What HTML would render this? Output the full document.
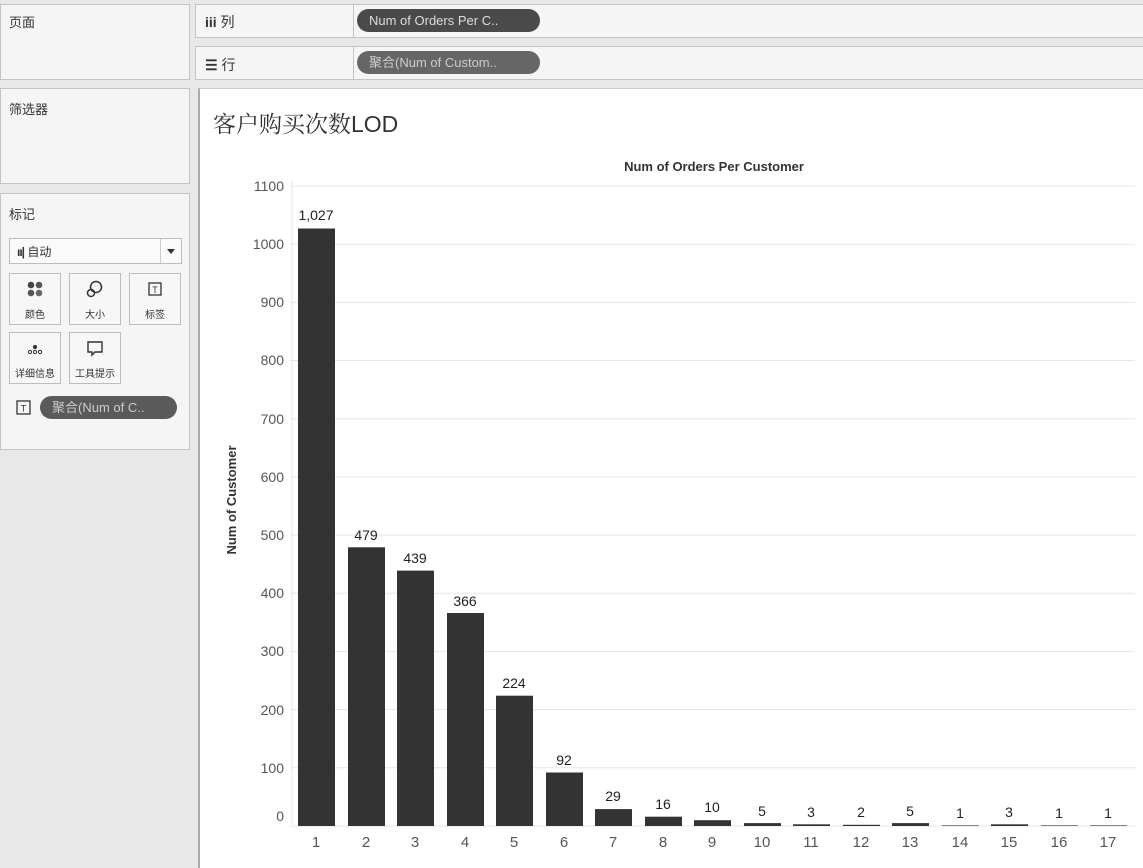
<!DOCTYPE html>
<html><head><meta charset="utf-8"><style>
*{margin:0;padding:0;box-sizing:border-box}
body{width:1143px;height:864px;background:#e8e8e8;position:relative;overflow:hidden;font-family:"Liberation Sans","Noto Sans CJK SC",sans-serif;color:#333}
.p{position:absolute;background:#f5f5f5;border:1px solid #c4c4c4}
.t{position:absolute;font-size:13px;color:#333}
.pill{position:absolute;border-radius:12px;color:#ddd;font-size:13px;line-height:23px;padding-left:12px;white-space:nowrap}
.btn{position:absolute;width:52px;height:52px;border:1px solid #bdbdbd;background:#f7f7f7;font-size:10px;text-align:center}
.btn span{position:absolute;bottom:3px;left:0;right:0}
</style></head><body>
<div class="p" style="left:0;top:4px;width:190px;height:76px"></div>
<div class="t" style="left:9px;top:12px">页面</div>
<div class="p" style="left:0;top:88px;width:190px;height:96px"></div>
<div class="t" style="left:9px;top:99px">筛选器</div>
<div class="p" style="left:0;top:193px;width:190px;height:257px"></div>
<div class="t" style="left:9px;top:204px">标记</div>
<div style="position:absolute;left:9px;top:238px;width:173px;height:26px;border:1px solid #bdbdbd;background:#fafafa"></div>
<div class="t" style="left:17px;top:243px;font-size:12px"><b style="letter-spacing:-1px">ıı|</b> 自动</div>
<div style="position:absolute;left:160px;top:239px;width:1px;height:24px;background:#ccc"></div>
<div style="position:absolute;left:167px;top:249px;border:4px solid transparent;border-top:5px solid #333"></div>
<div class="btn" style="left:9px;top:273px"><svg width="20" height="20" style="margin-top:5px" viewBox="0 0 20 20"><circle cx="6" cy="6" r="3.3" fill="#444"/><circle cx="14" cy="6" r="3.3" fill="#555"/><circle cx="6" cy="14" r="3.3" fill="#555"/><circle cx="14" cy="14" r="3.3" fill="#666"/></svg><span>颜色</span></div>
<div class="btn" style="left:69px;top:273px"><svg width="20" height="20" style="margin-top:5px" viewBox="0 0 20 20" fill="none" stroke="#333" stroke-width="1.5"><circle cx="11" cy="8" r="5.5"/><circle cx="6" cy="14" r="3.5"/></svg><span>大小</span></div>
<div class="btn" style="left:129px;top:273px"><svg width="20" height="20" style="margin-top:5px" viewBox="0 0 20 20"><rect x="4" y="4" width="12" height="12" fill="none" stroke="#333" stroke-width="1.3"/><text x="10" y="14" font-size="9" text-anchor="middle" fill="#333" font-family="Liberation Sans">T</text></svg><span>标签</span></div>
<div class="btn" style="left:9px;top:332px"><svg width="20" height="20" style="margin-top:5px" viewBox="0 0 20 20" fill="none" stroke="#333"><circle cx="10" cy="9" r="1.6" fill="#333"/><circle cx="5" cy="14" r="1.6"/><circle cx="10" cy="14" r="1.6"/><circle cx="15" cy="14" r="1.6"/></svg><span>详细信息</span></div>
<div class="btn" style="left:69px;top:332px"><svg width="20" height="20" style="margin-top:5px" viewBox="0 0 20 20" fill="none" stroke="#333" stroke-width="1.4"><path d="M3 4h14v10h-7l-3 3v-3H3z"/></svg><span>工具提示</span></div>
<svg style="position:absolute;left:15px;top:399px" width="18" height="18" viewBox="0 0 18 18"><rect x="2" y="2" width="13" height="13" fill="none" stroke="#333" stroke-width="1.3"/><text x="8.5" y="12.5" font-size="9" text-anchor="middle" fill="#333" font-family="Liberation Sans">T</text></svg>
<div class="pill" style="left:40px;top:396px;width:137px;background:#5a5a5a;color:#ccc">聚合(Num of C..</div>

<div class="p" style="left:195px;top:4px;width:950px;height:34px"></div>
<div class="p" style="left:195px;top:46px;width:950px;height:34px"></div>
<div style="position:absolute;left:353px;top:4px;width:1px;height:34px;background:#c4c4c4"></div>
<div style="position:absolute;left:353px;top:46px;width:1px;height:34px;background:#c4c4c4"></div>
<div class="t" style="left:205px;top:12px;font-size:14px"><b>iii</b> 列</div>
<div class="t" style="left:205px;top:55px;font-size:14px"><b>☰</b> 行</div>
<div class="pill" style="left:357px;top:9px;width:183px;background:#4a4a4a">Num of Orders Per C..</div>
<div class="pill" style="left:357px;top:51px;width:183px;background:#666;color:#ccc">聚合(Num of Custom..</div>

<div style="position:absolute;left:198px;top:88px;width:950px;height:780px;background:#fff;border-left:2px solid #aaa;border-top:1px solid #ccc"></div>
<div style="position:absolute;left:213px;top:106px;font-size:23px;color:#333;font-family:'Liberation Sans','Noto Serif CJK SC',sans-serif">客户购买次数LOD</div>
<svg style="position:absolute;left:0;top:0" width="1143" height="864" font-family="Liberation Sans, DejaVu Sans, sans-serif">
<text x="714" y="171" font-size="13" font-weight="bold" text-anchor="middle" fill="#333">Num of Orders Per Customer</text>
<text transform="translate(236,500) rotate(-90)" font-size="13" font-weight="bold" text-anchor="middle" fill="#333">Num of Customer</text>
<g stroke="#e6e6e6" stroke-width="1">
<line x1="290" x2="1135" y1="186" y2="186"/><line x1="290" x2="1135" y1="244.2" y2="244.2"/><line x1="290" x2="1135" y1="302.4" y2="302.4"/><line x1="290" x2="1135" y1="360.5" y2="360.5"/><line x1="290" x2="1135" y1="418.7" y2="418.7"/><line x1="290" x2="1135" y1="476.9" y2="476.9"/><line x1="290" x2="1135" y1="535.1" y2="535.1"/><line x1="290" x2="1135" y1="593.3" y2="593.3"/><line x1="290" x2="1135" y1="651.5" y2="651.5"/><line x1="290" x2="1135" y1="709.6" y2="709.6"/><line x1="290" x2="1135" y1="767.8" y2="767.8"/><line x1="290" x2="1135" y1="826" y2="826"/>
<line x1="292" x2="292" y1="180" y2="826"/>
</g>
<g font-size="14" fill="#555" text-anchor="end">
<text x="284" y="191">1100</text><text x="284" y="249">1000</text><text x="284" y="307">900</text><text x="284" y="365">800</text><text x="284" y="424">700</text><text x="284" y="482">600</text><text x="284" y="540">500</text><text x="284" y="598">400</text><text x="284" y="656">300</text><text x="284" y="715">200</text><text x="284" y="773">100</text><text x="284" y="821">0</text>
</g>
<g fill="#333">
<rect x="298" y="228.5" width="37" height="597.5"/>
<rect x="348" y="547.3" width="37" height="278.7"/>
<rect x="397" y="570.6" width="37" height="255.4"/>
<rect x="447" y="613" width="37" height="213"/>
<rect x="496" y="695.7" width="37" height="130.3"/>
<rect x="546" y="772.5" width="37" height="53.5"/>
<rect x="595" y="809.1" width="37" height="16.9"/>
<rect x="645" y="816.7" width="37" height="9.3"/>
<rect x="694" y="820.2" width="37" height="5.8"/>
<rect x="744" y="823.1" width="37" height="2.9"/>
<rect x="793" y="824.3" width="37" height="1.7"/>
<rect x="843" y="824.8" width="37" height="1.2"/>
<rect x="892" y="823.1" width="37" height="2.9"/>
<rect x="942" y="825.4" width="37" height="0.6"/>
<rect x="991" y="824.3" width="37" height="1.7"/>
<rect x="1041" y="825.4" width="37" height="0.6"/>
<rect x="1090" y="825.4" width="37" height="0.6"/>
</g>
<g font-size="14" fill="#222" text-anchor="middle">
<text x="316" y="220">1,027</text><text x="366" y="540">479</text><text x="415" y="563">439</text><text x="465" y="606">366</text><text x="514" y="688">224</text><text x="564" y="765">92</text><text x="613" y="801">29</text><text x="663" y="809">16</text><text x="712" y="812">10</text><text x="762" y="816">5</text><text x="811" y="817">3</text><text x="861" y="817">2</text><text x="910" y="816">5</text><text x="960" y="818">1</text><text x="1009" y="817">3</text><text x="1059" y="818">1</text><text x="1108" y="818">1</text>
</g>
<g font-size="15" fill="#555" text-anchor="middle">
<text x="316" y="847">1</text><text x="366" y="847">2</text><text x="415" y="847">3</text><text x="465" y="847">4</text><text x="514" y="847">5</text><text x="564" y="847">6</text><text x="613" y="847">7</text><text x="663" y="847">8</text><text x="712" y="847">9</text><text x="762" y="847">10</text><text x="811" y="847">11</text><text x="861" y="847">12</text><text x="910" y="847">13</text><text x="960" y="847">14</text><text x="1009" y="847">15</text><text x="1059" y="847">16</text><text x="1108" y="847">17</text>
</g>
</svg>
</body></html>
